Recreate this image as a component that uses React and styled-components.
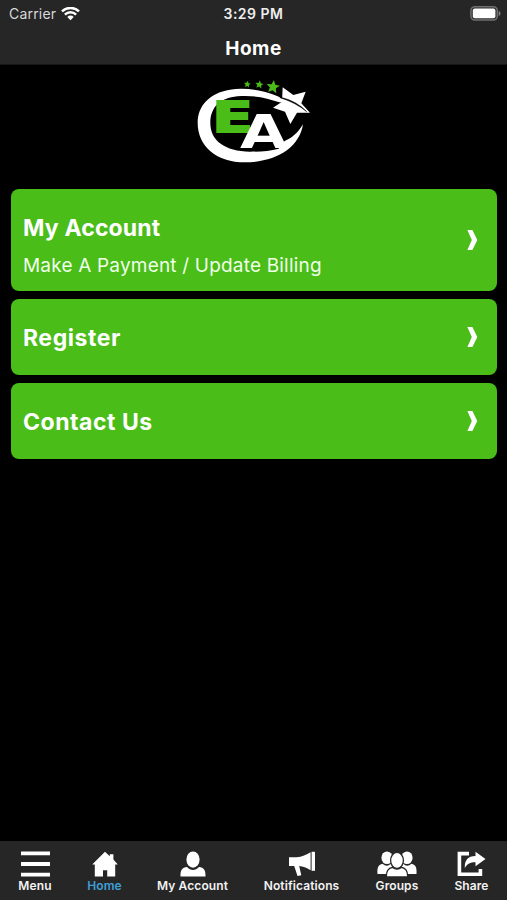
import styled, { createGlobalStyle } from "styled-components";

const menuItems = [
  { title: "My Account", subtitle: "Make A Payment / Update Billing", spacing: 0.15 },
  { title: "Register", spacing: 0.55 },
  { title: "Contact Us", spacing: 0.52 },
];

const starPoints = (cx, cy, r, turn = 0) =>
  Array.from({ length: 10 }, (_, i) => {
    const radius = i % 2 ? r * 0.45 : r;
    const a = ((i * 36 - 90 + turn) * Math.PI) / 180;
    return `${(cx + radius * Math.cos(a)).toFixed(1)},${(cy + radius * Math.sin(a)).toFixed(1)}`;
  }).join(" ");

const WifiIcon = () => (
  <svg width="19" height="14" viewBox="0 0 19 14">
    <g fill="none" stroke="#fff" strokeWidth="2.5">
      <path d="M1 4.4a12.2 12.2 0 0 1 17 0" />
      <path d="M3.9 7.6a8 8 0 0 1 11.2 0" />
    </g>
    <path d="M6.3 9.9a4.6 4.6 0 0 1 6.4 0L9.5 13.2z" fill="#fff" />
  </svg>
);

const BatteryIcon = () => (
  <svg width="31" height="16" viewBox="0 0 31 16">
    <rect x="0.9" y="0.7" width="26.4" height="13.4" rx="4" fill="#2d2d2d" stroke="#707070" strokeWidth="1.5" />
    <rect x="2.8" y="2.6" width="22.6" height="9.6" rx="2" fill="#fff" />
    <path d="M28.7 5.1c2.4.7 2.4 4 0 4.8z" fill="#808080" />
  </svg>
);

const Logo = () => (
  <svg width="130" height="100" viewBox="0 0 390 300">
    <path
      d="M300 98C245 64 175 50 120 59C58 69 23 108 23 158C23 230 80 277 165 277C255 277 328 235 339 163C322 191 304 205 284 213L266 236C240 243 215 245 180 245C105 244 61 212 61 159C61 112 90 84 142 79C190 75 230 83 268 97Z"
      fill="#fff"
    />
    <polygon points={starPoints(172, 43, 11, 8)} fill="#4abd18" />
    <polygon points={starPoints(208, 44, 13, 8)} fill="#4abd18" />
    <polygon points={starPoints(249, 51, 21, 8)} fill="#4abd18" />
    <polygon
      points="278,52 310,75 347,65 334,100 360,128 321,128 301,162 285,125 249,113 276,95"
      fill="#fff"
    />
    <path d="M270 81Q322 94 350 125Q318 98 270 83Z" fill="#000" stroke="#000" strokeWidth="1.5" />
    <LogoLetter x="67" y="187" textLength="122" fill="#4abd18" stroke="#4abd18" strokeWidth="6">
      E
    </LogoLetter>
    <LogoLetter x="150" y="235" textLength="142" fill="#fff" $size={136}>
      A
    </LogoLetter>
  </svg>
);

const Chevron = () => (
  <svg width="11" height="20" viewBox="0 0 11 20">
    <path d="M0.4 0H5.4L10.3 10L5.4 20H0.4L4.8 10Z" fill="#fff" />
  </svg>
);

const MenuIcon = () => (
  <svg width="29" height="26" viewBox="0 0 29 26">
    <path d="M0 2.3h29M0 13h29M0 23.7h29" stroke="#fff" strokeWidth="3.8" />
  </svg>
);

const HomeIcon = () => (
  <svg width="26" height="26" viewBox="0 0 26 26">
    <path d="M13 .8L17.8 5.2V3.2H21.4V8.5L25.8 13.4H23.2V25.5H15.2V19.3H11V25.5H2.8V13.4H.2Z" fill="#fff" />
  </svg>
);

const AccountIcon = () => (
  <svg width="26" height="26" viewBox="0 0 26 26">
    <ellipse cx="13" cy="8.6" rx="6.6" ry="8.1" fill="#fff" />
    <path d="M.5 25.5C.3 19 2.2 16.5 7 16C10.5 20 15.5 20 19 16C23.8 16.5 25.7 19 25.5 25.5Z" fill="#fff" />
  </svg>
);

const MegaphoneIcon = () => (
  <svg width="28" height="26" viewBox="0 0 28 26">
    <path d="M1 6.2H8.5C14 5.8 18.5 3.8 22.6 1.2V19.2C18.5 16.6 15 15.2 11.2 14.9L13.3 24.3L9.5 25.1L6.2 15.1H1Z" fill="#fff" />
    <path d="M23.6 .8H27V19.8H23.6Z" fill="#fff" />
  </svg>
);

const GroupsIcon = () => (
  <svg width="40" height="26" viewBox="0 0 40 26">
    <g fill="#fff">
      <ellipse cx="10" cy="6.8" rx="5.6" ry="6.3" />
      <ellipse cx="30" cy="6.8" rx="5.6" ry="6.3" />
      <path d="M.5 23C0 16 1.8 13.6 5.5 12.8Q10 17 14 12.5L18 23Z" />
      <path d="M39.5 23C40 16 38.2 13.6 34.5 12.8Q30 17 26 12.5L22 23Z" />
    </g>
    <g fill="#fff" stroke="#262626" strokeWidth="1.3">
      <path d="M9.4 26C9.1 19.5 11.5 17 15.3 16.3Q20 20 24.7 16.3C28.5 17 30.9 19.5 30.6 26Z" />
      <ellipse cx="20" cy="9.4" rx="6.4" ry="8" />
    </g>
  </svg>
);

const ShareIcon = () => (
  <svg width="29" height="26" viewBox="0 0 29 26">
    <path d="M12 2.6H2.4V23.3H23.4V18" fill="none" stroke="#fff" strokeWidth="3.6" />
    <path d="M7.8 17C7.5 9 11 5.2 18.5 5V.8L28.5 8L18.5 15.2V11.2C13.8 11 10.5 12.5 7.8 17Z" fill="#fff" />
  </svg>
);

const tabs = [
  { label: "Menu", icon: <MenuIcon />, width: 34 },
  { label: "Home", icon: <HomeIcon />, width: 35, active: true },
  { label: "My Account", icon: <AccountIcon />, width: 71 },
  { label: "Notifications", icon: <MegaphoneIcon />, width: 77 },
  { label: "Groups", icon: <GroupsIcon />, width: 44 },
  { label: "Share", icon: <ShareIcon />, width: 35 },
];

const App = () => {
  return (
    <Screen>
      <GlobalStyle />
      <Header>
        <StatusBar>
          <Carrier>
            Carrier <WifiIcon />
          </Carrier>
          <Time>3:29 PM</Time>
          <Battery>
            <BatteryIcon />
          </Battery>
        </StatusBar>
        <PageTitle>Home</PageTitle>
      </Header>
      <Content>
        <LogoWrap>
          <Logo />
        </LogoWrap>
        <List>
          {menuItems.map((item) => (
            <Card key={item.title} $tall={!!item.subtitle}>
              <CardText $tall={!!item.subtitle}>
                <CardTitle $spacing={item.spacing}>{item.title}</CardTitle>
                {item.subtitle && <CardSubtitle>{item.subtitle}</CardSubtitle>}
              </CardText>
              <Chevron />
            </Card>
          ))}
        </List>
      </Content>
      <TabBar>
        {tabs.map((tab) => (
          <Tab key={tab.label} $active={tab.active} $width={tab.width}>
            {tab.icon}
            <TabLabel>{tab.label}</TabLabel>
          </Tab>
        ))}
      </TabBar>
    </Screen>
  );
};

export default App;

const GlobalStyle = createGlobalStyle`
  * {
    box-sizing: border-box;
  }
  body {
    margin: 0;
    background: #000;
  }
  svg {
    display: block;
    flex: none;
  }
`;
const Screen = styled.div`
  display: flex;
  flex-direction: column;
  height: 100vh;
  background: #000;
  color: #fff;
  font-family: Inter, "Liberation Sans", sans-serif;
`;
const Header = styled.header`
  height: 65px;
  background: #262626;
  border-bottom: 1px solid #161616;
`;
const StatusBar = styled.div`
  display: grid;
  grid-template-columns: 1fr auto 1fr;
  align-items: center;
  height: 27px;
  padding: 0 6px 0 9px;
`;
const Carrier = styled.div`
  display: flex;
  align-items: center;
  gap: 5px;
  font-size: 14px;
  letter-spacing: 0.2px;
  color: #d8d8d8;
`;
const Time = styled.div`
  margin-right: 3px;
  font-size: 14px;
  font-weight: 600;
  letter-spacing: 0.5px;
  color: #eee;
`;
const Battery = styled.div`
  display: flex;
  justify-content: flex-end;
`;
const PageTitle = styled.h1`
  margin: 0;
  font-size: 19px;
  font-weight: 700;
  letter-spacing: 0.5px;
  line-height: 43px;
  text-align: center;
`;
const Content = styled.main`
  flex: 1;
  padding: 5px 10px 0 11px;
`;
const LogoWrap = styled.div`
  display: flex;
  justify-content: center;
  padding-left: 2px;
`;
const LogoLetter = styled.text.attrs({ lengthAdjust: "spacingAndGlyphs" })`
  font-family: "DejaVu Sans", sans-serif;
  font-size: ${(props) => props.$size || 128}px;
  font-weight: 700;
`;
const List = styled.div`
  display: flex;
  flex-direction: column;
  gap: 8px;
  padding-top: 19px;
`;
const Card = styled.div`
  display: flex;
  align-items: center;
  justify-content: space-between;
  height: ${(props) => (props.$tall ? 102 : 76)}px;
  padding: 0 19px 0 12px;
  border-radius: 8px;
  background: #4abd18;
  cursor: pointer;
`;
const CardText = styled.div`
  padding-top: ${(props) => (props.$tall ? 14 : 2)}px;
`;
const CardTitle = styled.div`
  font-size: 23px;
  font-weight: 700;
  letter-spacing: ${(props) => props.$spacing}px;
  line-height: 38px;
`;
const CardSubtitle = styled.div`
  font-size: 19px;
  letter-spacing: 0.19px;
  line-height: 38px;
  color: #f0ffea;
`;
const TabBar = styled.nav`
  display: flex;
  justify-content: space-between;
  height: 59px;
  padding: 10px 18px 0;
  background: #262626;
`;
const Tab = styled.div`
  display: flex;
  flex-direction: column;
  align-items: center;
  width: ${(props) => props.$width}px;
  color: ${(props) => (props.$active ? "#3f9fd8" : "#f2f2f2")};
`;
const TabLabel = styled.span`
  margin-top: 1px;
  font-size: 12px;
  font-weight: 600;
  letter-spacing: 0.1px;
  line-height: 16px;
  white-space: nowrap;
`;
